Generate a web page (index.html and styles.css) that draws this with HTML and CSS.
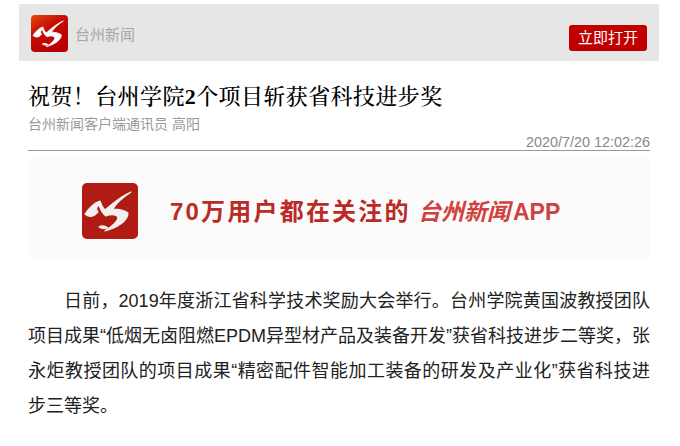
FILE: index.html
```html
<!DOCTYPE html>
<html lang="zh-CN">
<head>
    <meta charset="UTF-8">
    <meta name="viewport" content="width=device-width, initial-scale=1.0">
    <title>祝贺！台州学院2个项目斩获省科技进步奖</title>
    <link rel="stylesheet" href="styles.css">
</head>
<body>
    <div class="topbar">
        <div class="brand">
            <svg class="logo" viewBox="0 0 56 56">
                <defs>
                    <linearGradient id="logoBg" x1="0" y1="0" x2="0.6" y2="1">
                        <stop offset="0" stop-color="#e8470c"/>
                        <stop offset="0.45" stop-color="#c30d06"/>
                        <stop offset="1" stop-color="#b80000"/>
                    </linearGradient>
                </defs>
                <rect width="56" height="56" rx="6" fill="url(#logoBg)"/>
                <path class="swoosh" d="M3 31C7 25 12 20 18 18C19 22 21 25 23 27C28 23 37 14 49 9C43 13 34 20 31 26C36 26 42 27 46 30C46 38 35 45 23 48C29 44 36 39 36 34C34 31 28 31 24 33C21 31 18 25 17 22C14 24 14 27 16 29C12 34 8 35 3 31Z"/>
                <path class="swoosh" d="M17 44C20 42 23 43 26 45C23 46 20 46 17 44Z"/>
            </svg>
            <span class="brand-name">台州新闻</span>
        </div>
        <a class="open-btn" href="#">立即打开</a>
    </div>

    <div class="article">
        <h1 class="title">祝贺！台州学院<b>2</b>个项目斩获省科技进步奖</h1>
        <div class="source">台州新闻客户端通讯员 高阳</div>
        <div class="date">2020/7/20 12:02:26</div>

        <div class="banner">
            <svg class="banner-logo" viewBox="0 0 56 56">
                <rect width="56" height="56" rx="5" fill="#b01c14"/>
                <path class="swoosh-soft" d="M3 31C7 25 12 20 18 18C19 22 21 25 23 27C28 23 37 14 49 9C43 13 34 20 31 26C36 26 42 27 46 30C46 38 35 45 23 48C29 44 36 39 36 34C34 31 28 31 24 33C21 31 18 25 17 22C14 24 14 27 16 29C12 34 8 35 3 31Z"/>
                <path class="swoosh-soft" d="M17 44C20 42 23 43 26 45C23 46 20 46 17 44Z"/>
            </svg>
            <span class="banner-text">70万用户都在关注的</span>
            <span class="banner-app">台州新闻</span>
            <span class="banner-app-en">APP</span>
        </div>

        <p class="content">日前，2019年度浙江省科学技术奖励大会举行。台州学院黄国波教授团队项目成果“低烟无卤阻燃EPDM异型材产品及装备开发”获省科技进步二等奖，张永炬教授团队的项目成果“精密配件智能加工装备的研发及产业化”获省科技进步三等奖。</p>
    </div>
</body>
</html>
```

FILE: styles.css
```css
* {
    margin: 0;
    padding: 0;
    box-sizing: border-box;
}
html, body {
    background-color: #fff;
    font-family: "Liberation Sans", "Noto Sans CJK SC", sans-serif;
    overflow: hidden;
}
body {
    width: 680px;
    height: 446px;
    padding: 4px 21px 0 19px;
}
.topbar {
    height: 57px;
    background-color: #e6e6e6;
    display: flex;
    justify-content: space-between;
    padding: 11px 12px 0 12px;
}
.brand {
    display: flex;
    align-items: center;
    height: 37px;
    gap: 7px;
}
.logo {
    width: 37px;
    height: 37px;
    display: block;
}
.swoosh {
    fill: #fff;
    stroke: #fff;
    stroke-width: 1.2;
    stroke-linejoin: round;
}
.swoosh-soft {
    fill: #f2f0ef;
    stroke: #f2f0ef;
    stroke-width: 1.2;
    stroke-linejoin: round;
}
.brand-name {
    font-size: 15px;
    color: #a6a6a6;
}
.open-btn {
    display: block;
    width: 78px;
    height: 26px;
    margin-top: 10px;
    background-color: #c00000;
    border-radius: 3px;
    color: #fff;
    font-size: 15px;
    line-height: 26px;
    text-align: center;
    text-decoration: none;
}
.article {
    padding: 0 9px;
}
.title {
    margin-top: 23px;
    font-family: "Liberation Serif", "Noto Serif CJK SC", "Noto Sans CJK SC", serif;
    font-size: 22px;
    line-height: 26px;
    font-weight: 500;
    color: #000;
    letter-spacing: 0.4px;
}
.source {
    font-size: 14px;
    line-height: 16px;
    margin-top: 6px;
    color: #999;
}
.date {
    font-size: 14.4px;
    line-height: 16px;
    margin-top: 2px;
    color: #888;
    text-align: right;
    border-bottom: 1px solid #999;
}
.banner {
    height: 100px;
    margin-top: 7px;
    padding: 6px 0 0 54px;
    background-color: #fbfbfb;
    display: flex;
    align-items: center;
    color: #bb2a24;
}
.banner-logo {
    width: 56px;
    height: 56px;
    display: block;
    margin-right: 32px;
}
.banner-text {
    width: 248px;
    font-size: 24px;
    line-height: 30px;
    padding-top: 2px;
    font-weight: bold;
    letter-spacing: 2.2px;
    white-space: nowrap;
}
.banner-app {
    width: 95px;
    font-size: 23px;
    line-height: 30px;
    padding-top: 2px;
    font-weight: bold;
    font-style: italic;
    color: #d0423f;
    white-space: nowrap;
}
.banner-app-en {
    font-size: 23px;
    line-height: 30px;
    padding-top: 2px;
    font-weight: bold;
    color: #d0423f;
}
.content {
    margin-top: 26px;
    font-size: 18px;
    line-height: 35px;
    color: #222;
    text-indent: 36px;
    text-align: justify;
}
```
